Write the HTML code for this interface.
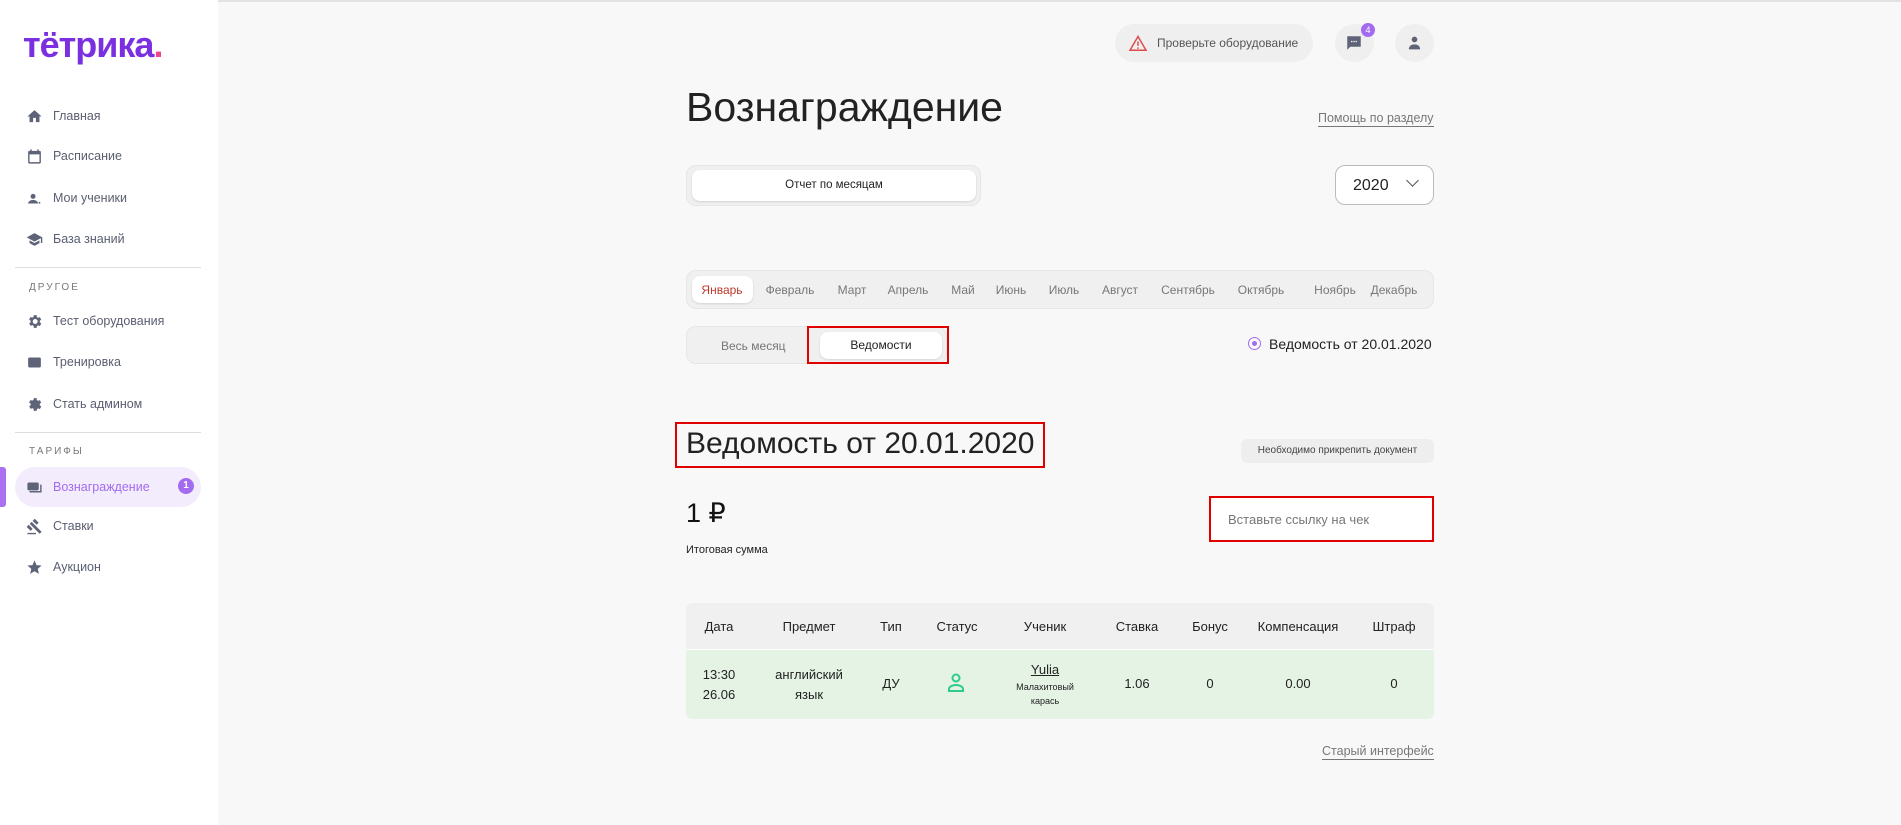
<!DOCTYPE html>
<html><head><meta charset="utf-8"><style>
*{box-sizing:border-box;margin:0;padding:0}
body{width:1901px;height:825px;overflow:hidden;background:#f8f8f8;font-family:"Liberation Sans",sans-serif;position:relative;color:#222}
.a{position:absolute}
#side{position:absolute;left:0;top:0;width:218px;height:825px;background:#fff}
.top{position:absolute;left:0;top:0;width:1901px;height:2px;background:#e2e2e2}
.nav{position:absolute;left:26px;font-size:12.5px;color:#5a5e70;display:flex;align-items:center;height:20px}
.nav svg{width:17px;height:17px;margin-right:10px;fill:#5f6378}
.cap{position:absolute;left:29px;font-size:10px;letter-spacing:2px;color:#777}
.hr{position:absolute;left:15px;width:186px;height:1px;background:#ddd}
.pill{background:#f0f0f0;border-radius:10px;border:1px solid #e6e6e6}
.wb{background:#fff;border-radius:8px;box-shadow:0 1px 2px rgba(0,0,0,.12)}
.red{position:absolute;border:2px solid #e00000}
.m{font-size:12px;color:#777;position:absolute;top:283px;transform:translateX(-50%);white-space:nowrap}
.c{position:absolute;transform:translateX(-50%);text-align:center;white-space:nowrap}
</style></head><body>
<div class="top"></div>
<div id="side">
<div class="a" style="left:23px;top:24px;font-size:36px;font-weight:bold;color:#7a2fe0;letter-spacing:-1px">тётрика<span style="color:#f0448c">.</span></div>
<div class="nav" style="top:106px"><svg viewBox="0 0 24 24"><path d="M10 20v-6h4v6h5v-8h3L12 3 2 12h3v8z"/></svg>Главная</div>
<div class="nav" style="top:146px"><svg viewBox="0 0 24 24"><path d="M19 4h-1V2h-2v2H8V2H6v2H5a2 2 0 00-2 2v14a2 2 0 002 2h14a2 2 0 002-2V6a2 2 0 00-2-2zm0 16H5V9h14z"/></svg>Расписание</div>
<div class="nav" style="top:188px"><svg viewBox="0 0 24 24"><circle cx="10" cy="9" r="3.5"/><path d="M3 19c0-3 4-5 7-5s7 2 7 5z"/><circle cx="19" cy="18" r="1.3"/></svg>Мои ученики</div>
<div class="nav" style="top:229px"><svg viewBox="0 0 24 24"><path d="M5 13.2v4L12 21l7-3.8v-4L12 17zM12 3 1 9l11 6 9-4.9V17h2V9z"/></svg>База знаний</div>
<div class="hr" style="top:267px"></div>
<div class="cap" style="top:282px">ДРУГОЕ</div>
<div class="nav" style="top:311px"><svg viewBox="0 0 24 24"><path d="M19.4 13a7 7 0 000-2l2.1-1.6-2-3.5-2.5 1a7 7 0 00-1.7-1L15 3h-4l-.4 2.6a7 7 0 00-1.7 1l-2.5-1-2 3.5L6.6 11a7 7 0 000 2l-2.1 1.6 2 3.5 2.5-1a7 7 0 001.7 1L11 21h4l.4-2.6a7 7 0 001.7-1l2.5 1 2-3.5zM13 15.5a3.5 3.5 0 110-7 3.5 3.5 0 010 7z"/></svg>Тест оборудования</div>
<div class="nav" style="top:352px"><svg viewBox="0 0 24 24"><rect x="3" y="5" width="18" height="14" rx="2"/></svg>Тренировка</div>
<div class="nav" style="top:394px"><svg viewBox="0 0 24 24"><path d="M19.4 13a7 7 0 000-2l2.1-1.6-2-3.5-2.5 1a7 7 0 00-1.7-1L15 3h-4l-.4 2.6a7 7 0 00-1.7 1l-2.5-1-2 3.5L6.6 11a7 7 0 000 2l-2.1 1.6 2 3.5 2.5-1a7 7 0 001.7 1L11 21h4l.4-2.6a7 7 0 001.7-1l2.5 1 2-3.5z"/></svg>Стать админом</div>
<div class="hr" style="top:432px"></div>
<div class="cap" style="top:446px">ТАРИФЫ</div>
<div class="a" style="left:0;top:467px;width:6px;height:40px;background:#a970f0;border-radius:0 3px 3px 0"></div>
<div class="a" style="left:15px;top:467px;width:186px;height:40px;background:#f3ecfd;border-radius:20px"></div>
<div class="nav" style="top:477px;color:#a36cf0"><svg viewBox="0 0 24 24"><rect x="2" y="5" width="16" height="11" rx="2"/><path d="M20 8h2v11H5v-2h15z"/></svg>Вознаграждение</div>
<div class="a" style="left:178px;top:478px;width:16px;height:16px;border-radius:50%;background:#a36cf0;color:#fff;font-size:10px;font-weight:bold;text-align:center;line-height:16px">1</div>
<div class="nav" style="top:516px"><svg viewBox="0 0 24 24"><path d="M2 21h12v2H2zM5.2 8.2l2.8-2.8 14.1 14.1-2.8 2.8zM12.3 1.1l5.6 5.6-2.8 2.9L9.4 4zM3.8 9.6l5.6 5.7-2.8 2.8L1 12.5z"/></svg>Ставки</div>
<div class="nav" style="top:557px"><svg viewBox="0 0 24 24"><path d="M12 17.3 18.2 21l-1.6-7L22 9.2l-7.2-.6L12 2 9.2 8.6 2 9.2 7.5 14l-1.7 7z"/></svg>Аукцион</div>
</div>

<div class="a" style="left:1115px;top:24px;width:198px;height:38px;border-radius:19px;background:#efefef;font-size:12px;color:#555;display:flex;align-items:center;padding-left:14px"><svg width="18" height="16" viewBox="0 0 24 22" style="margin-right:10px"><path d="M12 2 1 21h22z" fill="none" stroke="#e04a4a" stroke-width="2"/><path d="M12 9v6M12 17v2" stroke="#e04a4a" stroke-width="2"/></svg>Проверьте оборудование</div>
<div class="a" style="left:1335px;top:24px;width:39px;height:38px;border-radius:50%;background:#efefef"></div>
<svg class="a" style="left:1345px;top:34px" width="18" height="18" viewBox="0 0 24 24"><path d="M3 3h18v14H7l-4 4z" fill="#5f6378"/><circle cx="9" cy="10" r="1" fill="#fff"/><circle cx="12" cy="10" r="1" fill="#fff"/><circle cx="15" cy="10" r="1" fill="#fff"/></svg>
<div class="a" style="left:1361px;top:23px;width:14px;height:14px;border-radius:50%;background:#a36cf0;color:#fff;font-size:9px;text-align:center;line-height:14px">4</div>
<div class="a" style="left:1395px;top:24px;width:39px;height:38px;border-radius:50%;background:#efefef"></div>
<svg class="a" style="left:1406px;top:34px" width="17" height="18" viewBox="0 0 24 24"><circle cx="12" cy="7" r="4" fill="#5f6378"/><path d="M4 21c0-5 4-7 8-7s8 2 8 7z" fill="#5f6378"/></svg>

<div class="a" style="left:686px;top:84px;font-size:41px;color:#222">Вознаграждение</div>
<div class="a" style="left:1318px;top:111px;font-size:12.5px;color:#777;border-bottom:1px solid #777;padding-bottom:1px">Помощь по разделу</div>

<div class="a pill" style="left:686px;top:165px;width:295px;height:41px"></div>
<div class="a wb" style="left:692px;top:170px;width:284px;height:31px;font-size:11.5px;text-align:center;line-height:31px;color:#222">Отчет по месяцам</div>
<div class="a" style="left:1335px;top:165px;width:99px;height:40px;border:1px solid #bbb;border-radius:10px;background:#fff;font-size:16px;padding:11px 0 0 17px">2020<span style="position:absolute;left:72px;top:10px;width:9px;height:9px;border-right:1px solid #555;border-bottom:1px solid #555;transform:rotate(45deg)"></span></div>

<div class="a pill" style="left:686px;top:270px;width:748px;height:39px"></div>
<div class="a wb" style="left:692px;top:276px;width:61px;height:27px"></div>
<div class="m" style="left:722px;color:#c0392b">Январь</div>
<div class="m" style="left:790px">Февраль</div>
<div class="m" style="left:852px">Март</div>
<div class="m" style="left:908px">Апрель</div>
<div class="m" style="left:963px">Май</div>
<div class="m" style="left:1011px">Июнь</div>
<div class="m" style="left:1064px">Июль</div>
<div class="m" style="left:1120px">Август</div>
<div class="m" style="left:1188px">Сентябрь</div>
<div class="m" style="left:1261px">Октябрь</div>
<div class="m" style="left:1335px">Ноябрь</div>
<div class="m" style="left:1394px">Декабрь</div>

<div class="a pill" style="left:686px;top:326px;width:261px;height:38px"></div>
<div class="a" style="left:721px;top:339px;font-size:12px;color:#777">Весь месяц</div>
<div class="a wb" style="left:820px;top:332px;width:122px;height:27px;font-size:12px;text-align:center;line-height:27px">Ведомости</div>
<div class="red" style="left:807px;top:326px;width:142px;height:38px"></div>
<div class="a" style="left:1248px;top:337px;width:13px;height:13px;border-radius:50%;border:1.5px solid #a36cf0"><div style="margin:2.5px;width:5px;height:5px;border-radius:50%;background:#a36cf0"></div></div>
<div class="a" style="left:1269px;top:336px;font-size:14px;color:#222">Ведомость от 20.01.2020</div>

<div class="a" style="left:686px;top:427px;font-size:30px;color:#222">Ведомость от 20.01.2020</div>
<div class="red" style="left:675px;top:422px;width:370px;height:46px"></div>
<div class="a" style="left:1241px;top:439px;width:193px;height:24px;background:#eee;border-radius:6px;font-size:10px;color:#444;text-align:center;line-height:24px">Необходимо прикрепить документ</div>

<div class="a" style="left:686px;top:498px;font-size:27px;color:#111">1 ₽</div>
<div class="a" style="left:686px;top:544px;font-size:11px;color:#222">Итоговая сумма</div>
<div class="a" style="left:1211px;top:498px;width:221px;height:42px;background:#fff;border-radius:4px"></div>
<div class="a" style="left:1228px;top:512px;font-size:13px;color:#777">Вставьте ссылку на чек</div>
<div class="red" style="left:1209px;top:496px;width:225px;height:46px"></div>

<div class="a" style="left:686px;top:603px;width:748px;height:46px;background:#f0f0f0;border-radius:6px 6px 0 0"></div>
<div class="a" style="left:686px;top:649px;width:748px;height:70px;background:#e4f3e4;border-radius:0 0 6px 6px;border-top:1px solid #fff"></div>
<div style="font-size:13px;color:#222">
<div class="c" style="left:719px;top:619px">Дата</div>
<div class="c" style="left:809px;top:619px">Предмет</div>
<div class="c" style="left:891px;top:619px">Тип</div>
<div class="c" style="left:957px;top:619px">Статус</div>
<div class="c" style="left:1045px;top:619px">Ученик</div>
<div class="c" style="left:1137px;top:619px">Ставка</div>
<div class="c" style="left:1210px;top:619px">Бонус</div>
<div class="c" style="left:1298px;top:619px">Компенсация</div>
<div class="c" style="left:1394px;top:619px">Штраф</div>
<div class="c" style="left:719px;top:665px;line-height:20px">13:30<br>26.06</div>
<div class="c" style="left:809px;top:665px;line-height:20px">английский<br>язык</div>
<div class="c" style="left:891px;top:676px">ДУ</div>
<div class="c" style="left:1045px;top:662px;text-decoration:underline">Yulia</div>
<div class="c" style="left:1045px;top:680px;font-size:9px;line-height:14px">Малахитовый<br>карась</div>
<div class="c" style="left:1137px;top:676px">1.06</div>
<div class="c" style="left:1210px;top:676px">0</div>
<div class="c" style="left:1298px;top:676px">0.00</div>
<div class="c" style="left:1394px;top:676px">0</div>
</div>
<svg class="a" style="left:947px;top:673px" width="18" height="20" viewBox="0 0 18 20"><circle cx="9" cy="5" r="3.5" fill="none" stroke="#2ecc8a" stroke-width="2"/><path d="M2 18v-2c0-2 3-4 7-4s7 2 7 4v2z" fill="none" stroke="#2ecc8a" stroke-width="2"/></svg>

<div class="a" style="left:1322px;top:744px;font-size:12.5px;color:#777;border-bottom:1px solid #777;padding-bottom:1px">Старый интерфейс</div>
</body></html>
